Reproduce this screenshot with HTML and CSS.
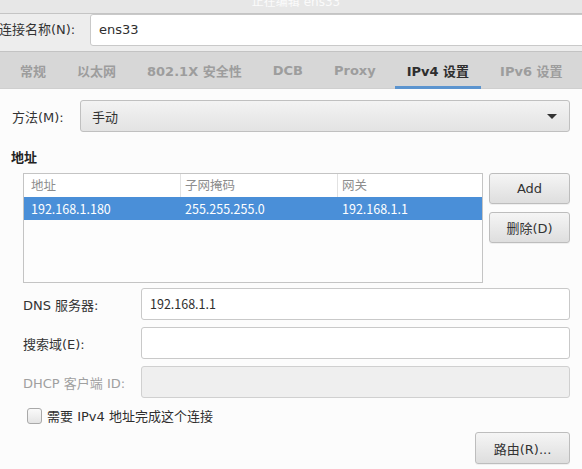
FILE: index.html
```html
<!DOCTYPE html>
<html lang="zh">
<head>
<meta charset="utf-8">
<link rel="stylesheet" href="styles.css">
</head>
<body>
<div class="window">
  <div class="titlebar"><span class="title">正在编辑 ens33</span></div>
  <div class="namerow">
    <label class="namelabel">连接名称(N):</label>
    <div class="nameinput">ens33</div>
  </div>
  <div class="tabs">
    <div class="tab">常规</div>
    <div class="tab">以太网</div>
    <div class="tab">802.1X 安全性</div>
    <div class="tab">DCB</div>
    <div class="tab">Proxy</div>
    <div class="tab active">IPv4 设置</div>
    <div class="tab">IPv6 设置</div>
  </div>
  <div class="content">
    <div class="methodrow">
      <span class="label">方法(M):</span>
      <div class="combo"><span>手动</span><span class="arrow"></span></div>
    </div>
    <div class="section-title">地址</div>
    <div class="addr">
      <div class="table">
        <div class="row head">
          <div class="cell">地址</div>
          <div class="cell">子网掩码</div>
          <div class="cell">网关</div>
        </div>
        <div class="row selected">
          <div class="cell">192.168.1.180</div>
          <div class="cell">255.255.255.0</div>
          <div class="cell">192.168.1.1</div>
        </div>
      </div>
      <div class="btncol">
        <button class="btn">Add</button>
        <button class="btn">删除(D)</button>
      </div>
    </div>
    <div class="fields">
      <div class="field">
        <span class="flabel">DNS 服务器:</span>
        <div class="input">192.168.1.1</div>
      </div>
      <div class="field">
        <span class="flabel">搜索域(E):</span>
        <div class="input"></div>
      </div>
      <div class="field">
        <span class="flabel disabled">DHCP 客户端 ID:</span>
        <div class="input off"></div>
      </div>
    </div>
    <div class="checkrow">
      <span class="checkbox"></span>
      <span class="checktext">需要 IPv4 地址完成这个连接</span>
    </div>
    <div class="bottom">
      <button class="btn route">路由(R)...</button>
    </div>
  </div>
</div>
</body>
</html>
```

FILE: styles.css
```css
* { box-sizing: border-box; }
html, body { margin: 0; padding: 0; }
body {
  width: 582px;
  height: 469px;
  overflow: hidden;
  background: #fcfcfc;
  font-family: "DejaVu Sans", "Noto Sans CJK SC", sans-serif;
  font-size: 13px;
  color: #333;
}
.window { display: flex; flex-direction: column; }

.titlebar {
  height: 14px;
  background: #e7e7e7;
  border-bottom: 1px solid #c4c4c4;
  overflow: hidden;
  display: flex;
  justify-content: center;
  padding-left: 10px;
}
.title {
  color: #fbfbfb;
  font-size: 12px;
  line-height: 4px;
}

.namerow {
  height: 37px;
  background: #ededed;
  display: flex;
  align-items: flex-start;
}
.namelabel {
  width: 91px;
  line-height: 31px;
  color: #333;
  margin-left: -1px;
}
.nameinput {
  flex: 1;
  height: 32px;
  margin-right: -10px;
  background: #fff;
  border: 1px solid #c9c9c9;
  border-radius: 3px;
  line-height: 30px;
  padding-left: 8px;
  color: #2e2e2e;
}

.tabs {
  height: 38px;
  background: #d7d7d7;
  border-top: 1px solid #c3c3c3;
  border-bottom: 1px solid #cfcfcf;
  display: flex;
  align-items: stretch;
  padding-left: 4.5px;
}
.tab {
  position: relative;
  padding: 0 15.5px;
  display: flex;
  align-items: center;
  font-weight: bold;
  color: #9d9d9d;
  white-space: nowrap;
}
.tab.active { color: #2e2e2e; }
.tab.active::after {
  content: "";
  position: absolute;
  left: 4px;
  right: 4px;
  bottom: -1px;
  height: 3px;
  background: #5b94cf;
}

.content {
  padding: 11px 12px 0 12px;
  display: flex;
  flex-direction: column;
}
.methodrow {
  display: flex;
  align-items: center;
  height: 32px;
}
.methodrow .label { width: 68px; color: #333; }
.combo {
  flex: 1;
  height: 32px;
  border: 1px solid #c0c0c0;
  border-radius: 3px;
  background: linear-gradient(#f3f3f3, #e3e3e3);
  display: flex;
  align-items: center;
  justify-content: space-between;
  padding: 0 12px 0 11px;
  color: #333;
}
.arrow {
  width: 0; height: 0;
  border-left: 5px solid transparent;
  border-right: 5px solid transparent;
  border-top: 5px solid #333;
}

.section-title {
  font-weight: bold;
  margin-top: 18px;
  margin-left: -1px;
  line-height: 16px;
  color: #222;
}

.addr {
  display: flex;
  margin-top: 7px;
  margin-left: 11px;
  gap: 6px;
}
.table {
  width: 460px;
  height: 110px;
  border: 1px solid #c4c4c4;
  background: #fdfdfd;
}
.row {
  display: grid;
  grid-template-columns: 156px 157px 1fr;
  height: 23px;
}
.row .cell {
  padding-left: 7px;
  line-height: 23px;
  white-space: nowrap;
}
.row.head { background: #fff; }
.row.head .cell {
  color: #8d8d8d;
  font-family: "Noto Sans CJK SC", sans-serif;
  font-size: 12.5px;
  line-height: 22px;
}
.row.head .cell + .cell { border-left: 1px solid #e2e2e2; padding-left: 4px; }
.row.selected { background: #4a8fd8; }
.row.selected .cell {
  color: #fff;
  font-family: "Noto Sans CJK SC", sans-serif;
  font-size: 12.5px;
}
.row.selected .cell + .cell { padding-left: 5px; }

.btncol { display: flex; flex-direction: column; gap: 8px; }
.btn {
  width: 81px;
  height: 31px;
  border: 1px solid #bdbdbd;
  border-radius: 3px;
  background: linear-gradient(#f5f5f5, #dedede);
  font-family: "DejaVu Sans", "Noto Sans CJK SC", sans-serif;
  font-size: 13px;
  color: #333;
  padding: 0;
  box-shadow: 0 1px 0 rgba(0,0,0,0.05);
}

.fields {
  display: flex;
  flex-direction: column;
  gap: 7px;
  margin-top: 5px;
  margin-left: 11px;
}
.field { display: flex; align-items: center; height: 32px; }
.flabel { width: 118px; color: #333; white-space: nowrap; }
.flabel.disabled { color: #a0a0a0; }
.input {
  flex: 1;
  height: 32px;
  border: 1px solid #c9c9c9;
  border-radius: 3px;
  background: #fff;
  padding-left: 8px;
  line-height: 30px;
  font-family: "Noto Sans CJK SC", sans-serif;
  font-size: 12.5px;
  color: #2e2e2e;
}
.input.off { background: #efefef; border-color: #d0d0d0; }

.checkrow {
  display: flex;
  align-items: center;
  margin-top: 8px;
  margin-left: 15px;
  gap: 5px;
}
.checkbox {
  width: 15px;
  height: 16px;
  border: 1px solid #a9a9a9;
  border-radius: 3px;
  background: linear-gradient(#fafafa, #e4e4e4);
}
.checktext { color: #2e2e2e; }

.bottom {
  display: flex;
  justify-content: flex-end;
  margin-top: 7px;
}
.btn.route { width: 95px; height: 32px; }
```
